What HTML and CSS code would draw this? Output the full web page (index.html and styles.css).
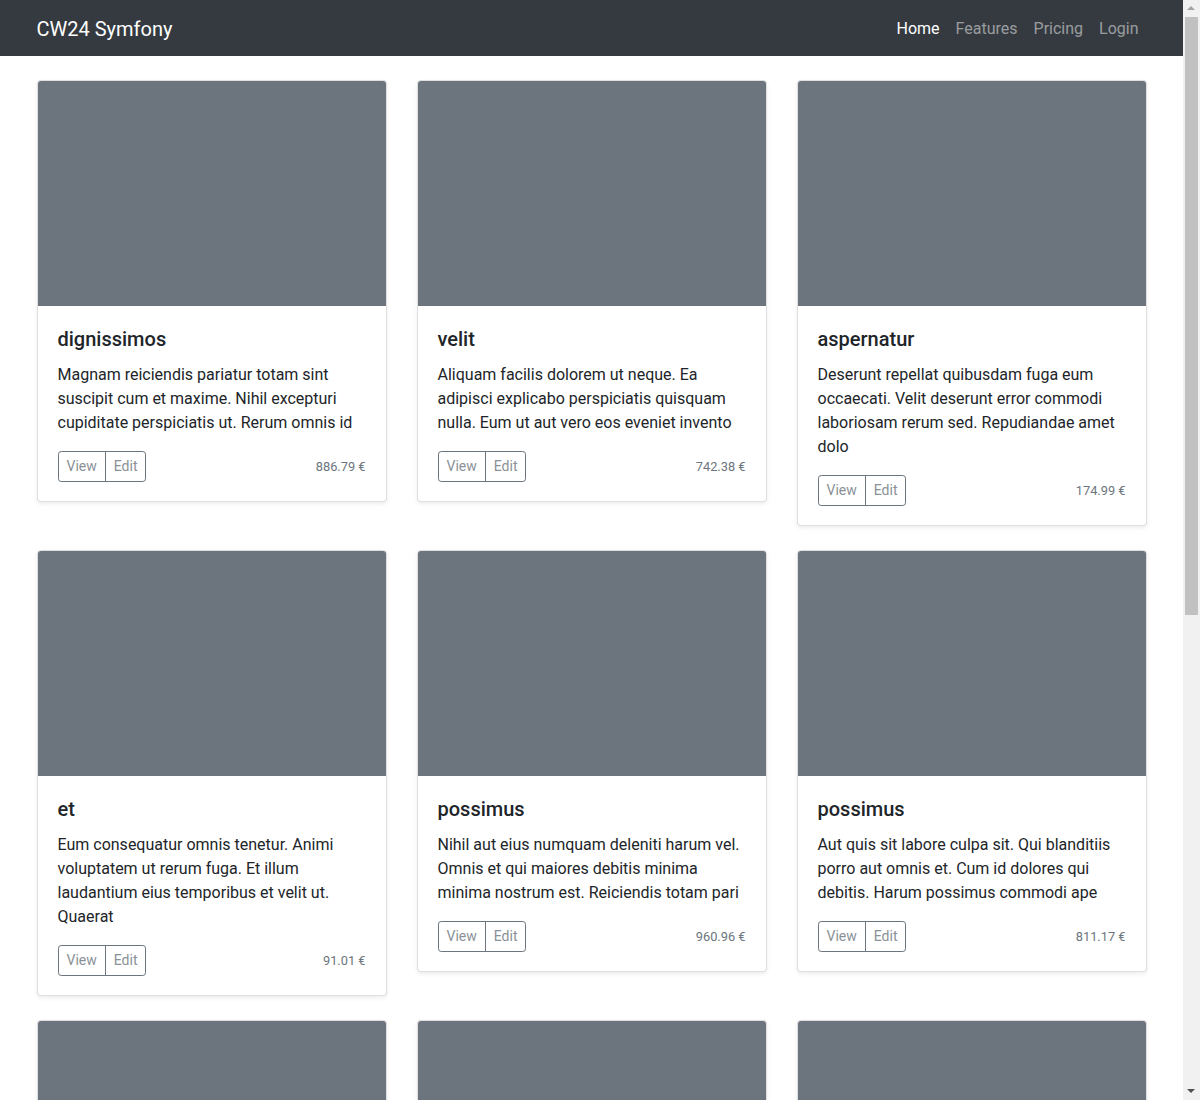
FILE: index.html
```html
<!DOCTYPE html>
<html lang="en">
<head>
<meta charset="utf-8">
<title>CW24 Symfony</title>
<link rel="stylesheet" href="styles.css">
</head>
<body>
<header class="navbar">
  <div class="container nav-inner">
    <a class="brand" href="#">CW24 Symfony</a>
    <nav class="nav-links">
      <a class="nav-link active" href="#">Home</a>
      <a class="nav-link" href="#">Features</a>
      <a class="nav-link" href="#">Pricing</a>
      <a class="nav-link" href="#">Login</a>
    </nav>
  </div>
</header>
<main class="album">
  <div class="container">
    <div class="grid">
      <div class="card">
        <div class="card-img"></div>
        <div class="card-body">
          <h5 class="card-title">dignissimos</h5>
          <p class="card-text">Magnam reiciendis pariatur totam sint suscipit cum et maxime. Nihil excepturi cupiditate perspiciatis ut. Rerum omnis id</p>
          <div class="card-footer">
            <div class="btn-group"><button class="btn">View</button><button class="btn">Edit</button></div>
            <small class="price">886.79 €</small>
          </div>
        </div>
      </div>
      <div class="card">
        <div class="card-img"></div>
        <div class="card-body">
          <h5 class="card-title">velit</h5>
          <p class="card-text">Aliquam facilis dolorem ut neque. Ea adipisci explicabo perspiciatis quisquam nulla. Eum ut aut vero eos eveniet invento</p>
          <div class="card-footer">
            <div class="btn-group"><button class="btn">View</button><button class="btn">Edit</button></div>
            <small class="price">742.38 €</small>
          </div>
        </div>
      </div>
      <div class="card">
        <div class="card-img"></div>
        <div class="card-body">
          <h5 class="card-title">aspernatur</h5>
          <p class="card-text">Deserunt repellat quibusdam fuga eum occaecati. Velit deserunt error commodi laboriosam rerum sed. Repudiandae amet dolo</p>
          <div class="card-footer">
            <div class="btn-group"><button class="btn">View</button><button class="btn">Edit</button></div>
            <small class="price">174.99 €</small>
          </div>
        </div>
      </div>
      <div class="card">
        <div class="card-img"></div>
        <div class="card-body">
          <h5 class="card-title">et</h5>
          <p class="card-text">Eum consequatur omnis tenetur. Animi voluptatem ut rerum fuga. Et illum laudantium eius temporibus et velit ut. Quaerat</p>
          <div class="card-footer">
            <div class="btn-group"><button class="btn">View</button><button class="btn">Edit</button></div>
            <small class="price">91.01 €</small>
          </div>
        </div>
      </div>
      <div class="card">
        <div class="card-img"></div>
        <div class="card-body">
          <h5 class="card-title">possimus</h5>
          <p class="card-text">Nihil aut eius numquam deleniti harum vel. Omnis et qui maiores debitis minima minima nostrum est. Reiciendis totam pari</p>
          <div class="card-footer">
            <div class="btn-group"><button class="btn">View</button><button class="btn">Edit</button></div>
            <small class="price">960.96 €</small>
          </div>
        </div>
      </div>
      <div class="card">
        <div class="card-img"></div>
        <div class="card-body">
          <h5 class="card-title">possimus</h5>
          <p class="card-text">Aut quis sit labore culpa sit. Qui blanditiis porro aut omnis et. Cum id dolores qui debitis. Harum possimus commodi ape</p>
          <div class="card-footer">
            <div class="btn-group"><button class="btn">View</button><button class="btn">Edit</button></div>
            <small class="price">811.17 €</small>
          </div>
        </div>
      </div>
      <div class="card">
        <div class="card-img"></div>
      </div>
      <div class="card">
        <div class="card-img"></div>
      </div>
      <div class="card">
        <div class="card-img"></div>
      </div>
    </div>
  </div>
</main>
<div class="scrollbar" aria-hidden="true">
  <div class="sb-arrow sb-up"></div>
  <div class="sb-thumb"></div>
  <div class="sb-arrow sb-down"></div>
</div>
</body>
</html>
```
FILE: styles.css
```css
*,
*::before,
*::after {
  box-sizing: border-box;
}

body {
  margin: 0 17px 0 0;
  font-family: Roboto, "Liberation Sans", sans-serif;
  font-size: 16px;
  line-height: 1.5;
  color: #212529;
  background: #fff;
}

.container {
  width: 100%;
  max-width: 1140px;
  margin: 0 auto;
  padding: 0 15px;
}

/* Navbar */
.navbar {
  background: #343a40;
  padding: 8px 16px;
}

.nav-inner {
  display: flex;
  align-items: center;
  justify-content: space-between;
}

.brand {
  color: #fff;
  text-decoration: none;
  font-size: 20px;
  line-height: 30px;
  padding: 6px 0 4px;
}

.nav-links {
  display: flex;
}

.nav-link {
  color: rgba(255, 255, 255, 0.5);
  text-decoration: none;
  padding: 9px 8px 7px;
  line-height: 24px;
}

.nav-link.active {
  color: #fff;
}

/* Album */
.album {
  padding-top: 24px;
}

.grid {
  display: grid;
  grid-template-columns: repeat(3, 1fr);
  column-gap: 30px;
  row-gap: 24px;
  align-items: start;
  padding-bottom: 24px;
}

.card {
  background: #fff;
  border: 1px solid rgba(0, 0, 0, 0.125);
  border-radius: 4px;
  box-shadow: 0 2px 4px rgba(0, 0, 0, 0.075);
  overflow: hidden;
}

.card-img {
  height: 225px;
  background: #6c757d;
}

.card-body {
  padding: 21px 20px 19px;
}

.card-title {
  margin: 0 0 12px;
  font-size: 20px;
  font-weight: 500;
  line-height: 1.2;
}

.card-text {
  margin: 0 0 16px;
}

.card-footer {
  display: flex;
  justify-content: space-between;
  align-items: center;
}

.btn-group {
  display: inline-flex;
}

.btn {
  font-family: inherit;
  font-size: 14px;
  line-height: 1.5;
  padding: 4px 8px;
  color: #8a9197;
  background: transparent;
  border: 1px solid #6c757d;
  cursor: pointer;
}

.btn:first-child {
  border-radius: 3.2px 0 0 3.2px;
}

.btn:last-child {
  border-radius: 0 3.2px 3.2px 0;
  margin-left: -1px;
}

.price {
  font-size: 12.8px;
  color: #6c757d;
}

/* Classic window scrollbar drawn over the right edge */
.scrollbar {
  position: fixed;
  top: 0;
  right: 0;
  width: 17px;
  height: 100vh;
  background: #f1f1f1;
}

.sb-thumb {
  position: absolute;
  top: 17px;
  left: 2px;
  width: 13px;
  height: 598px;
  background: #c1c1c1;
}

.sb-arrow {
  position: absolute;
  left: 4px;
  width: 0;
  height: 0;
  border-left: 4.5px solid transparent;
  border-right: 4.5px solid transparent;
}

.sb-up {
  top: 6px;
  border-bottom: 4.5px solid #a3a3a3;
}

.sb-down {
  bottom: 7px;
  border-top: 4.5px solid #505050;
}
```
